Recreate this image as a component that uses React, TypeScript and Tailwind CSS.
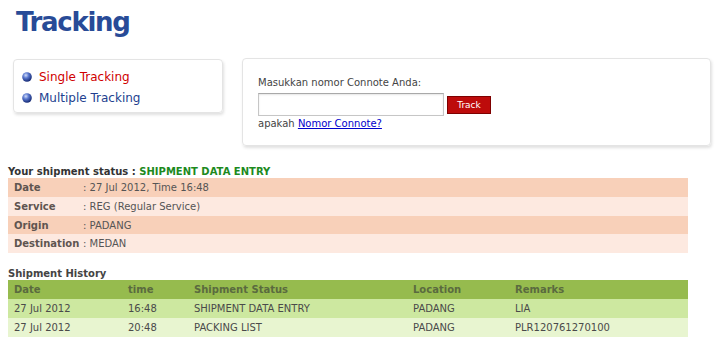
const details = [
  { label: 'Date', value: ': 27 Jul 2012, Time 16:48', bg: 'bg-[#f8d0b9]', h: 'h-[19px]' },
  { label: 'Service', value: ': REG (Regular Service)', bg: 'bg-[#fde9e0]', h: 'h-[19px]' },
  { label: 'Origin', value: ': PADANG', bg: 'bg-[#f8d0b9]', h: 'h-[18px]' },
  { label: 'Destination', value: ': MEDAN', bg: 'bg-[#fde9e0]', h: 'h-[19px]' },
]

const history = [
  { date: '27 Jul 2012', time: '16:48', status: 'SHIPMENT DATA ENTRY', location: 'PADANG', remarks: 'LIA', bg: 'bg-[#cde8a0]' },
  { date: '27 Jul 2012', time: '20:48', status: 'PACKING LIST', location: 'PADANG', remarks: 'PLR120761270100', bg: 'bg-[#e8f5d0]' },
]

function Bullet() {
  return (
    <svg width="10" height="10" viewBox="0 0 10 10" className="shrink-0">
      <defs>
        <radialGradient id="ball" cx="38%" cy="32%" r="65%">
          <stop offset="0%" stopColor="#d2ddf8" />
          <stop offset="45%" stopColor="#5a78cf" />
          <stop offset="100%" stopColor="#1a2f7a" />
        </radialGradient>
      </defs>
      <circle cx="5" cy="5" r="4.8" fill="url(#ball)" />
    </svg>
  )
}

export default function App() {
  return (
    <div className="w-[721px] h-[361px] overflow-hidden bg-white font-['DejaVu_Sans',sans-serif] text-[10px] text-[#555]">
      <h1 className="pl-[16px] pt-[7px] h-[37px] text-[26px] leading-[30px] font-bold tracking-[-1.3px] text-[#284b97]">
        Tracking
      </h1>

      {/* Tracking options + connote form */}
      <div className="flex items-start mt-[21px] pl-[13px] h-[88px]">
        <div className="mt-[1px] w-[210px] h-[54px] rounded-[4px] border border-[#e4e4e4] shadow-[1px_2px_3px_rgba(0,0,0,0.12)] pt-[6px] pl-[8px]">
          <div className="flex items-center gap-[7px] h-[21px] text-[12px] text-[#d00000]">
            <Bullet />
            <span>Single Tracking</span>
          </div>
          <div className="flex items-center gap-[7px] h-[21px] text-[12px] text-[#223f8f]">
            <Bullet />
            <span>Multiple Tracking</span>
          </div>
        </div>

        <div className="ml-[19px] w-[469px] h-[88px] rounded-[4px] border border-[#e4e4e4] shadow-[1px_2px_3px_rgba(0,0,0,0.12)] pl-[15px] pt-[17px]">
          <p className="h-[14px] leading-[14px] text-[#444]">Masukkan nomor Connote Anda:</p>
          <div className="flex items-center mt-[3px] h-[23px]">
            <input className="w-[186px] h-[23px] border border-[#c6c6c6] border-t-[#a9a9a9] shadow-[inset_0_1px_2px_rgba(0,0,0,0.1)] outline-none" />
            <button className="ml-[3px] w-[44px] h-[18px] bg-[#bd0b0b] border border-[#7e0000] text-white text-[9px] leading-[16px]">
              Track
            </button>
          </div>
          <p className="mt-[1px] h-[14px] leading-[14px] text-[#444]">
            apakah <a className="text-[#0000cc] underline">Nomor Connote?</a>
          </p>
        </div>
      </div>

      {/* Shipment status */}
      <div className="px-[8px] mt-[18px]">
        <p className="h-[14px] leading-[16px] font-bold text-[#333]">
          Your shipment status : <span className="text-[#1d8a1d]">SHIPMENT DATA ENTRY</span>
        </p>
        <div className="w-[680px]">
          {details.map((d) => (
            <div key={d.label} className={`flex items-center ${d.h} ${d.bg} pl-[6px]`}>
              <span className="w-[69px] font-bold text-[#5f5550]">{d.label}</span>
              <span>{d.value}</span>
            </div>
          ))}
        </div>

        <p className="mt-[13px] h-[14px] leading-[15px] font-bold text-[#444]">Shipment History</p>
        <div className="w-[680px]">
          <div className="grid grid-cols-[114px_66px_219px_102px_1fr] items-center h-[19px] bg-[#96bb4e] pl-[6px] font-bold text-[#5a6a3f]">
            <span>Date</span>
            <span>time</span>
            <span>Shipment Status</span>
            <span>Location</span>
            <span>Remarks</span>
          </div>
          {history.map((r) => (
            <div key={r.time} className={`grid grid-cols-[114px_66px_219px_102px_1fr] items-center h-[19px] ${r.bg} pl-[6px] text-[#4a4a4a]`}>
              <span>{r.date}</span>
              <span>{r.time}</span>
              <span>{r.status}</span>
              <span>{r.location}</span>
              <span>{r.remarks}</span>
            </div>
          ))}
        </div>
      </div>
    </div>
  )
}
